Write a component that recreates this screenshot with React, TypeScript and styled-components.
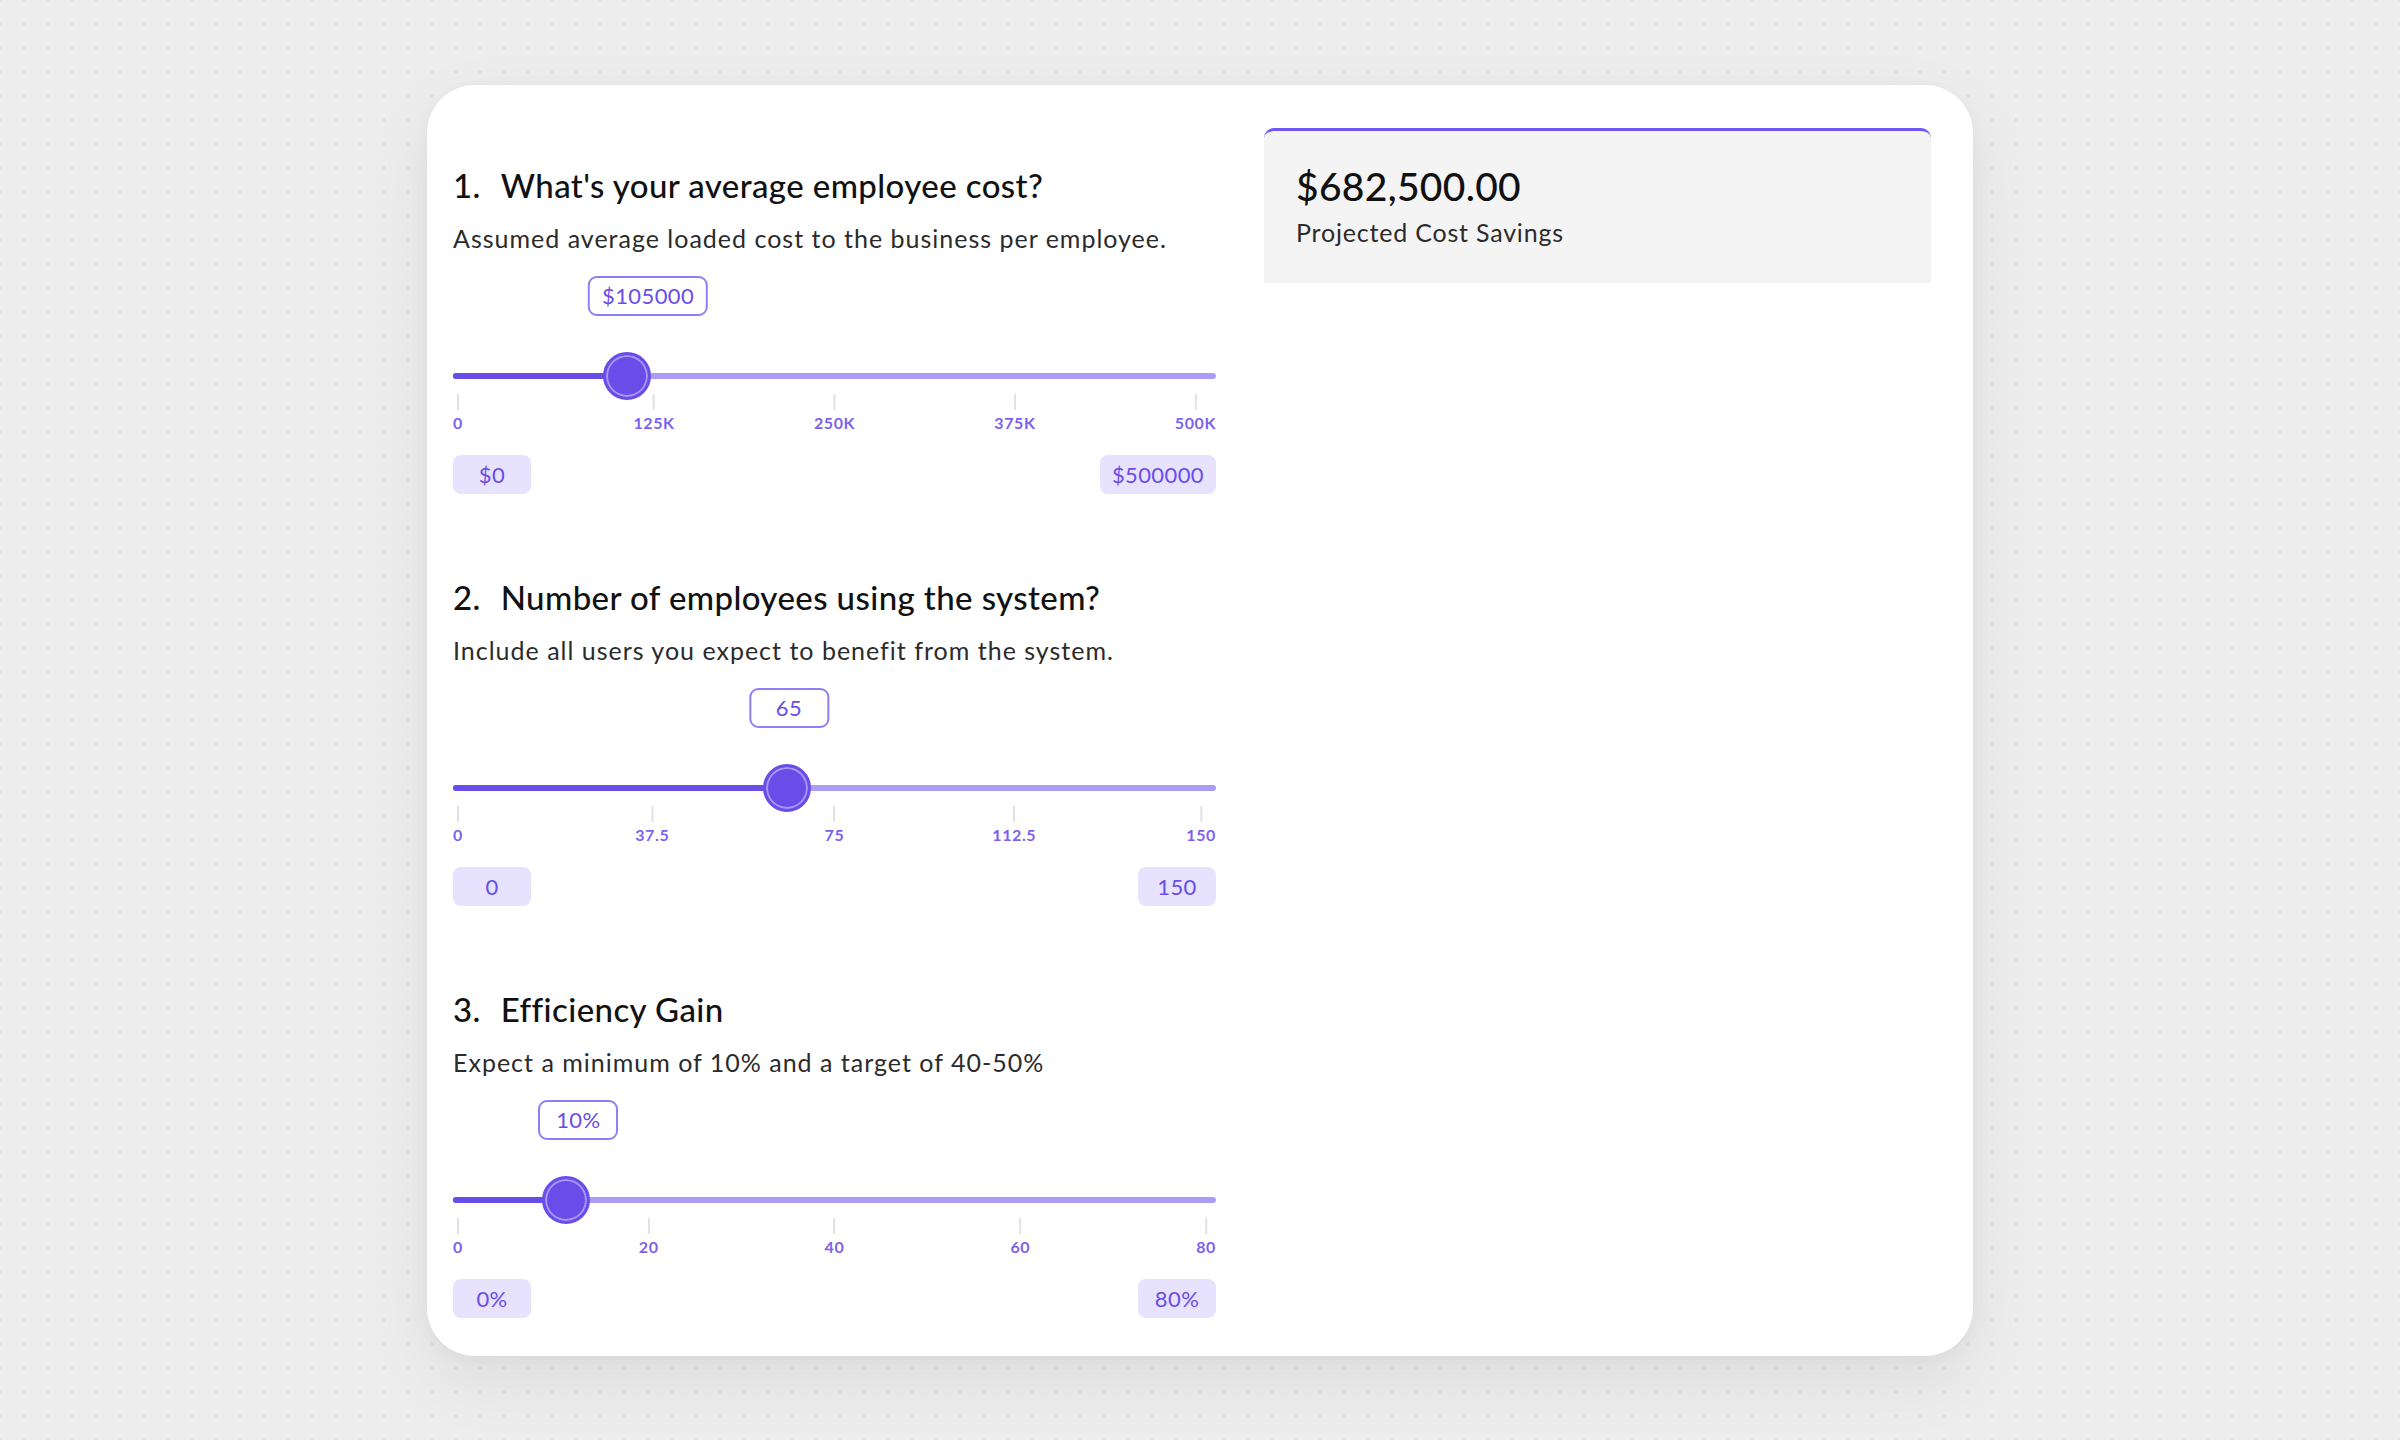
import React from 'react';
import styled, { createGlobalStyle } from 'styled-components';

const GlobalStyle = createGlobalStyle`
  html, body {
    margin: 0;
    padding: 0;
  }
  body {
    font-family: Lato, "Open Sans", "Noto Sans", sans-serif;
    background-color: #ededed;
    background-image: radial-gradient(circle, #e1e1e1 1.5px, transparent 1.8px);
    background-size: 24px 24px;
    background-position: 12px 12px;
    color: #111;
  }
`;

const purple = '#6a4de8';
const purpleLight = '#ab9cf6';

const Page = styled.div`
  min-height: 100vh;
  display: flex;
  align-items: center;
  justify-content: center;
`;

const Card = styled.div`
  width: 1546px;
  box-sizing: border-box;
  background: #fff;
  border-radius: 48px;
  box-shadow: 0 24px 70px rgba(0, 0, 0, 0.07), 0 4px 16px rgba(0, 0, 0, 0.03);
  padding: 43px 42px 38px 26px;
  display: grid;
  grid-template-columns: 763px 1fr;
  column-gap: 48px;
  align-items: start;
`;

const Questions = styled.div`
  padding-top: 37px;
  display: flex;
  flex-direction: column;
  gap: 83px;
`;

const Section = styled.section`
  display: flex;
  flex-direction: column;
`;

const Heading = styled.h2`
  margin: 0;
  font-size: 33px;
  line-height: 40px;
  font-weight: 500;
  letter-spacing: 0.4px;
  color: #111;
  display: flex;
  align-items: baseline;
`;

const Num = styled.span`
  margin-right: 20px;
`;

const Hint = styled.p`
  margin: 17px 0 0;
  font-size: 25px;
  line-height: 32px;
  letter-spacing: 1px;
  color: #2b2b2b;
`;

const TagRow = styled.div`
  position: relative;
  height: 40px;
  margin-top: 22px;
`;

const Tag = styled.div`
  position: absolute;
  top: 0;
  height: 40px;
  min-width: 80px;
  box-sizing: border-box;
  padding: 0 12px;
  border: 2px solid #8f7ef5;
  border-radius: 9px;
  background: #fff;
  color: ${purple};
  font-size: 22px;
  letter-spacing: 0.4px;
  display: flex;
  align-items: center;
  justify-content: center;
`;

const TrackRow = styled.div`
  position: relative;
  height: 36px;
  margin-top: 42px;
`;

const Rail = styled.div`
  position: absolute;
  left: 0;
  right: 0;
  top: 15px;
  height: 6px;
  border-radius: 3px;
  background: ${purpleLight};
`;

const Fill = styled.div`
  position: absolute;
  left: 0;
  top: 15px;
  height: 6px;
  border-radius: 3px;
  background: ${purple};
`;

const Thumb = styled.div`
  position: absolute;
  top: 18px;
  width: 48px;
  height: 48px;
  box-sizing: border-box;
  border-radius: 50%;
  background: ${purple};
  border: 3px solid ${purple};
  box-shadow: inset 0 0 0 2px #a897f7;
  transform: translate(-50%, -50%);
`;

const Scale = styled.div`
  position: relative;
  height: 39px;
`;

const Mark = styled.div`
  position: absolute;
  top: 0;
  display: flex;
  flex-direction: column;
  align-items: center;
`;

const Tick = styled.div`
  width: 2px;
  height: 16px;
  background: #e2e2e2;
`;

const MarkLabel = styled.span`
  margin-top: 3px;
  font-size: 16px;
  line-height: 20px;
  font-weight: 700;
  letter-spacing: 0.6px;
  color: #7b62ee;
`;

const Bounds = styled.div`
  margin-top: 22px;
  display: flex;
  justify-content: space-between;
`;

const Pill = styled.div`
  height: 39px;
  min-width: 78px;
  box-sizing: border-box;
  padding: 0 12px;
  border-radius: 8px;
  background: #e7e2fd;
  color: ${purple};
  font-size: 22px;
  letter-spacing: 0.4px;
  display: flex;
  align-items: center;
  justify-content: center;
`;

const Summary = styled.div`
  background: #f4f4f4;
  border-top: 3px solid #7055f5;
  border-radius: 10px 10px 0 0;
  padding: 32px 32px 36px;
`;

const Amount = styled.div`
  font-size: 39px;
  line-height: 46px;
  font-weight: 500;
  letter-spacing: 0.3px;
  color: #111;
`;

const AmountLabel = styled.div`
  margin-top: 8px;
  font-size: 25px;
  line-height: 30px;
  letter-spacing: 0.8px;
  color: #2b2b2b;
`;

type SliderProps = {
  min: number;
  max: number;
  value: number;
  marks: string[];
  format: (v: number) => string;
};

const THUMB = 48;

// thumb centre, kept inside the rail like a native range input
const thumbAt = (p: number) => `calc(${THUMB / 2}px + ${p} * (100% - ${THUMB}px))`;

// label placed at p% of the row and shifted back by p% of its own width
const labelAt = (p: number): React.CSSProperties => ({
  left: `${p * 100}%`,
  transform: `translateX(-${p * 100}%)`,
});

const Slider = ({ min, max, value, marks, format }: SliderProps) => {
  const p = (value - min) / (max - min);
  const center = thumbAt(p);
  return (
    <>
      <TagRow>
        <Tag style={labelAt(p)}>{format(value)}</Tag>
      </TagRow>
      <TrackRow>
        <Rail />
        <Fill style={{ width: center }} />
        <Thumb style={{ left: center }} />
      </TrackRow>
      <Scale>
        {marks.map((m, i) => (
          <Mark key={m} style={labelAt(i / (marks.length - 1))}>
            <Tick />
            <MarkLabel>{m}</MarkLabel>
          </Mark>
        ))}
      </Scale>
      <Bounds>
        <Pill>{format(min)}</Pill>
        <Pill>{format(max)}</Pill>
      </Bounds>
    </>
  );
};

const questions = [
  {
    title: "What's your average employee cost?",
    hint: 'Assumed average loaded cost to the business per employee.',
    min: 0,
    max: 500000,
    value: 105000,
    marks: ['0', '125K', '250K', '375K', '500K'],
    format: (v: number) => `$${v}`,
  },
  {
    title: 'Number of employees using the system?',
    hint: 'Include all users you expect to benefit from the system.',
    min: 0,
    max: 150,
    value: 65,
    marks: ['0', '37.5', '75', '112.5', '150'],
    format: (v: number) => `${v}`,
  },
  {
    title: 'Efficiency Gain',
    hint: 'Expect a minimum of 10% and a target of 40-50%',
    min: 0,
    max: 80,
    value: 10,
    marks: ['0', '20', '40', '60', '80'],
    format: (v: number) => `${v}%`,
  },
];

const App = () => {
  const [cost, employees, gain] = questions.map((q) => q.value);
  const savings = cost * employees * (gain / 100);

  return (
    <Page>
      <GlobalStyle />
      <Card>
        <Questions>
          {questions.map((q, i) => (
            <Section key={q.title}>
              <Heading>
                <Num>{i + 1}.</Num>
                {q.title}
              </Heading>
              <Hint>{q.hint}</Hint>
              <Slider min={q.min} max={q.max} value={q.value} marks={q.marks} format={q.format} />
            </Section>
          ))}
        </Questions>
        <Summary>
          <Amount>
            ${savings.toLocaleString('en-US', { minimumFractionDigits: 2, maximumFractionDigits: 2 })}
          </Amount>
          <AmountLabel>Projected Cost Savings</AmountLabel>
        </Summary>
      </Card>
    </Page>
  );
};

export default App;
